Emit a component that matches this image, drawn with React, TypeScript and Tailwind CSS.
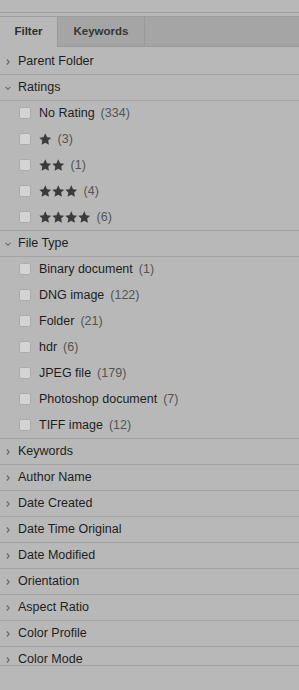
import React from "react";

const font = { fontFamily: '"Liberation Sans", Arial, sans-serif' };

const Chevron = ({ open }: { open?: boolean }) => (
  <svg width="8" height="8" viewBox="0 0 8 8" className="shrink-0">
    {open ? (
      <polyline points="1.5,2.8 4,5.2 6.5,2.8" fill="none" stroke="#6a6a6a" strokeWidth="1.1" />
    ) : (
      <polyline points="2.8,1.5 5.2,4 2.8,6.5" fill="none" stroke="#6a6a6a" strokeWidth="1.1" />
    )}
  </svg>
);

const Star = () => (
  <svg width="12.5" height="12" viewBox="1.3 1.4 21.4 20.4" className="shrink-0">
    <path
      d="M12 1.8l3.1 6.6 7.1.9-5.2 5 1.3 7.1L12 18l-6.3 3.4 1.3-7.1-5.2-5 7.1-.9z"
      fill="#3b3b3b"
    />
  </svg>
);

const Header = ({ label, open }: { label: string; open?: boolean }) => (
  <div className="flex h-[25px] items-center border-b border-[#a2a2a2] pl-[4px] box-content">
    <Chevron open={open} />
    <span className="ml-[6px] text-[12.5px] text-[#1e1e1e]">{label}</span>
  </div>
);

const Item = ({ label, count, stars }: { label?: string; count: number; stars?: number }) => (
  <div className="flex h-[26px] items-center pl-[19px]">
    <div className="h-[12px] w-[12px] rounded-[2.5px] border border-[#ababab] bg-[#d4d4d4]" />
    <div className="ml-[8px] flex items-center">
      {stars ? (
        <div className="flex gap-[0.5px]">
          {Array.from({ length: stars }).map((_, i) => (
            <Star key={i} />
          ))}
        </div>
      ) : (
        <span className="text-[12.5px] text-[#1e1e1e]">{label}</span>
      )}
      <span className="ml-[6px] text-[12.5px] text-[#555555]">({count})</span>
    </div>
  </div>
);

export default function App() {
  const ratings = [
    { label: "No Rating", count: 334 },
    { stars: 1, count: 3 },
    { stars: 2, count: 1 },
    { stars: 3, count: 4 },
    { stars: 4, count: 6 },
  ];
  const fileTypes = [
    { label: "Binary document", count: 1 },
    { label: "DNG image", count: 122 },
    { label: "Folder", count: 21 },
    { label: "hdr", count: 6 },
    { label: "JPEG file", count: 179 },
    { label: "Photoshop document", count: 7 },
    { label: "TIFF image", count: 12 },
  ];
  const rest = [
    "Keywords",
    "Author Name",
    "Date Created",
    "Date Time Original",
    "Date Modified",
    "Orientation",
    "Aspect Ratio",
    "Color Profile",
    "Color Mode",
  ];

  return (
    <div className="h-[690px] w-[299px] overflow-hidden bg-[#b8b8b8]" style={font}>
      <div className="h-[12px]" />
      <div className="h-px bg-[#9f9f9f]" />
      <div className="h-[3px]" />
      {/* tabs */}
      <div className="flex h-[29px] border-b border-[#999999] border-t border-t-[#9d9d9d] bg-[#a5a5a5] box-content">
        <div className="flex w-[58px] items-center justify-center border-r border-[#999999] bg-[#b8b8b8] -mb-px">
          <span className="text-[11.5px] font-bold text-[#2e2e2e]">Filter</span>
        </div>
        <div className="flex w-[87px] items-center justify-center border-r border-[#999999]">
          <span className="text-[11.5px] font-bold text-[#363636]">Keywords</span>
        </div>
      </div>
      <div className="h-[2px]" />
      <div className="h-[616px] overflow-hidden border-b border-[#a2a2a2] box-content">
        <Header label="Parent Folder" />
        <Header label="Ratings" open />
        <div className="-mt-px border-b border-[#a2a2a2]">
          {ratings.map((r, i) => (
            <Item key={i} {...r} />
          ))}
        </div>
        <Header label="File Type" open />
        <div className="-mt-px border-b border-[#a2a2a2]">
          {fileTypes.map((r, i) => (
            <Item key={i} {...r} />
          ))}
        </div>
        {rest.map((l) => (
          <Header key={l} label={l} />
        ))}
      </div>
    </div>
  );
}
